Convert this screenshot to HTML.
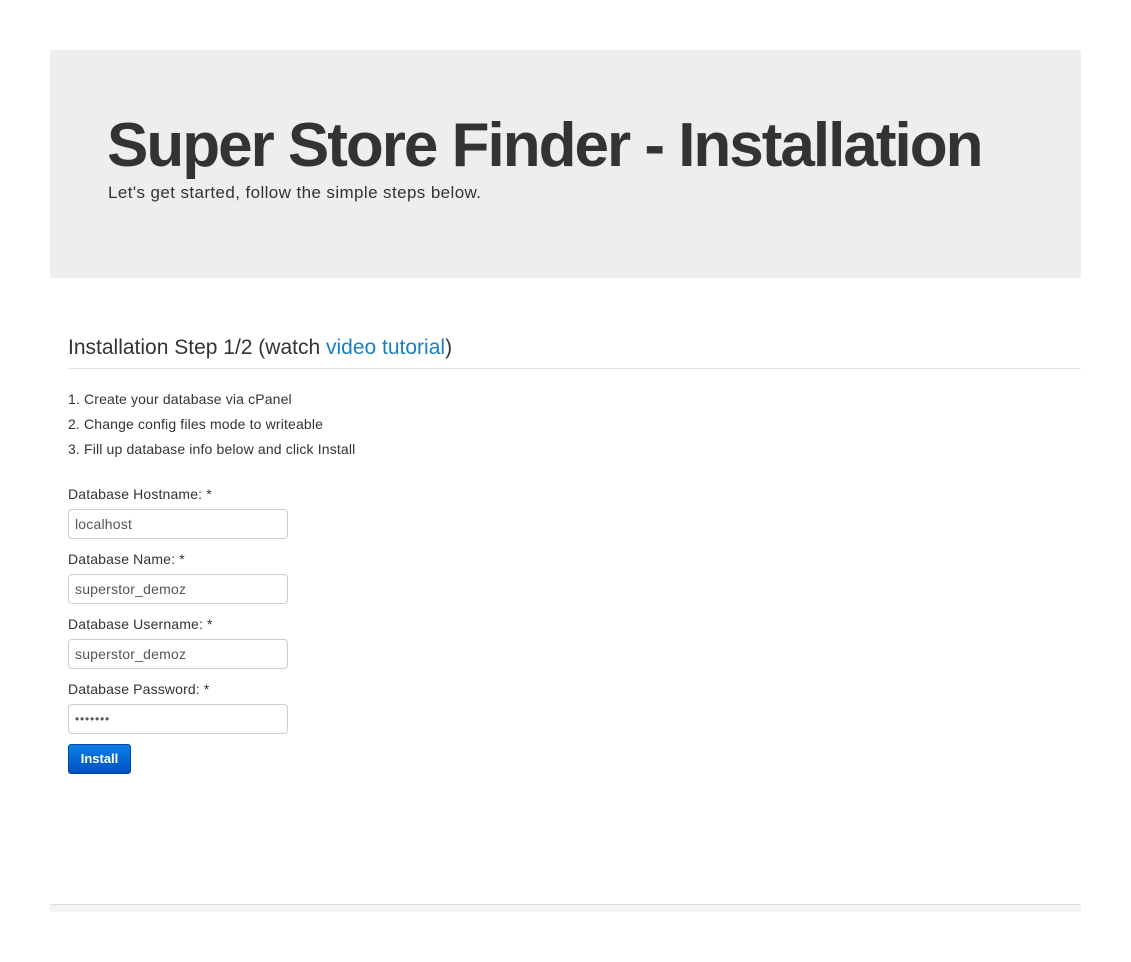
<!DOCTYPE html>
<html><head><style>
body{margin:0;background:#fff;font-family:"Liberation Sans",Arial,sans-serif;color:#333;width:1131px;height:962px;position:relative;overflow:hidden}
.a{position:absolute;white-space:nowrap}
.hero{position:absolute;left:50px;top:50px;width:1031px;height:228px;background:#eee}
.inp{position:absolute;left:68px;width:218px;height:28px;border:1px solid #ccc;border-radius:4px;background:#fff;font-size:14px;color:#555;line-height:28px;box-sizing:content-box;letter-spacing:0.2px}
.inp span{position:absolute;left:6px;top:0}
.lbl{position:absolute;left:68px;font-size:14px;line-height:16px;color:#333;letter-spacing:0.15px;white-space:nowrap}
</style></head><body>
<div class="hero"></div>
<div class="a" style="left:107px;top:108px;font-size:62px;font-weight:bold;line-height:76px;color:#333;letter-spacing:-2px">Super Store Finder - Installation</div>
<div class="a" style="left:108px;top:183px;font-size:17px;line-height:20px;color:#333;letter-spacing:0.4px">Let's get started, follow the simple steps below.</div>
<div class="a" style="left:68px;top:335px;font-size:21px;line-height:25px;color:#333">Installation Step 1/2 (watch <span style="color:#1a7fc3">video tutorial</span>)</div>
<div style="position:absolute;left:68px;top:368px;width:1013px;height:1px;background:#e5e5e5"></div>
<div class="lbl" style="top:391px">1. Create your database via cPanel</div>
<div class="lbl" style="top:416px">2. Change config files mode to writeable</div>
<div class="lbl" style="top:441px">3. Fill up database info below and click Install</div>
<div class="lbl" style="top:486px">Database Hostname: *</div>
<div class="inp" style="top:509px"><span>localhost</span></div>
<div class="lbl" style="top:551px">Database Name: *</div>
<div class="inp" style="top:574px"><span>superstor_demoz</span></div>
<div class="lbl" style="top:616px">Database Username: *</div>
<div class="inp" style="top:639px"><span>superstor_demoz</span></div>
<div class="lbl" style="top:681px">Database Password: *</div>
<div class="inp" style="top:704px"><span style="font-size:12px;letter-spacing:0.8px">•••••••</span></div>
<div class="a" style="left:68px;top:744px;width:61px;height:28px;border:1px solid #0048a8;border-radius:3px;background:linear-gradient(#0d7fe6,#0052c2);color:#fff;font-size:13px;font-weight:bold;line-height:28px;text-align:center">Install</div>
<div style="position:absolute;left:50px;top:904px;width:1031px;height:7px;border-top:1px solid #ddd;background:#f5f5f5"></div>
</body></html>
